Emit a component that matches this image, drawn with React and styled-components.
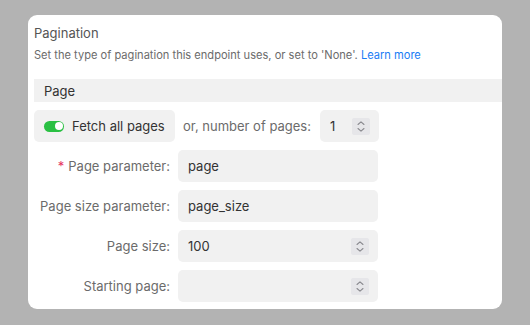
import React from "react";
import styled, { createGlobalStyle } from "styled-components";

const Global = createGlobalStyle`
  html, body { margin: 0; padding: 0; background: #b3b3b3; }
  body { font-family: Inter, "Noto Sans", sans-serif; -webkit-font-smoothing: antialiased; }
`;

const Page = styled.div`
  width: 530px;
  height: 325px;
  padding: 15px 0 0 28px;
  box-sizing: border-box;
`;

const Card = styled.div`
  width: 474px;
  height: 294px;
  background: #fff;
  border-radius: 9px;
  overflow: hidden;
  padding: 9px 0 0 6px;
  box-sizing: border-box;
`;

const Title = styled.div`
  font-size: 13px;
  color: #555;
  line-height: 18px;
  margin-bottom: 5px;
`;

const Desc = styled.div`
  font-size: 11.1px;
  color: #6b6b6b;
  line-height: 16px;
  margin-bottom: 16px;
  white-space: nowrap;
`;

const Link = styled.a`
  color: #1a7cf5;
  text-decoration: none;
`;

const Select = styled.div`
  height: 23px;
  width: calc(100% + 20px);
  background: #f1f1f1;
  display: flex;
  align-items: center;
  padding-left: 10px;
  box-sizing: border-box;
  font-size: 13px;
  color: #333;
  margin-bottom: 8px;
`;

const Row = styled.div`
  display: flex;
  align-items: center;
  height: 32px;
  margin-bottom: 8px;
`;

const FetchButton = styled.div`
  width: 141px;
  height: 32px;
  background: #f1f1f1;
  border-radius: 5px;
  display: flex;
  align-items: center;
  padding-left: 10px;
  box-sizing: border-box;
  gap: 8px;
  font-size: 13px;
  color: #333;
`;

const Toggle = styled.span`
  width: 20px;
  height: 11px;
  border-radius: 6px;
  background: #2ac043;
  position: relative;
  &::after {
    content: "";
    position: absolute;
    right: 1.5px;
    top: 1.5px;
    width: 8px;
    height: 8px;
    border-radius: 50%;
    background: #fff;
  }
`;

const Muted = styled.span`
  font-size: 13px;
  color: #6b6b6b;
  margin: 0 9px 0 8px;
`;

const Label = styled.label`
  width: 136px;
  text-align: right;
  font-size: 13px;
  color: #6b6b6b;
  margin-right: 8px;
  flex-shrink: 0;
`;

const Req = styled.span`
  color: #e5355f;
  margin-right: 4px;
`;

const Input = styled.div`
  width: ${(p) => p.$w || 200}px;
  height: 32px;
  background: #f1f1f1;
  border-radius: 5px;
  display: flex;
  align-items: center;
  justify-content: space-between;
  padding: 0 9px 0 10px;
  box-sizing: border-box;
  font-size: 13px;
  color: #333;
`;

const Stepper = styled.span`
  width: 18px;
  height: 17px;
  background: #e6e6e9;
  border-radius: 2px;
  display: flex;
  align-items: center;
  justify-content: center;
`;

const Steps = () => (
  <Stepper>
    <svg width="10" height="13" viewBox="0 0 10 13" fill="none" stroke="#8a8a8f" strokeWidth="1.1" strokeLinecap="round" strokeLinejoin="round">
      <path d="M2 4.5 L5 1.8 L8 4.5" />
      <path d="M2 8.5 L5 11.2 L8 8.5" />
    </svg>
  </Stepper>
);

export default function App() {
  return (
    <Page>
      <Global />
      <Card>
        <Title>Pagination</Title>
        <Desc>
          Set the type of pagination this endpoint uses, or set to 'None'. <Link>Learn more</Link>
        </Desc>
        <Select>Page</Select>
        <Row>
          <FetchButton>
            <Toggle />
            Fetch all pages
          </FetchButton>
          <Muted>or, number of pages:</Muted>
          <Input $w={59}>
            1
            <Steps />
          </Input>
        </Row>
        <Row>
          <Label>
            <Req>*</Req>Page parameter:
          </Label>
          <Input>page</Input>
        </Row>
        <Row>
          <Label>Page size parameter:</Label>
          <Input>page_size</Input>
        </Row>
        <Row>
          <Label>Page size:</Label>
          <Input>
            100
            <Steps />
          </Input>
        </Row>
        <Row>
          <Label>Starting page:</Label>
          <Input>
            <span />
            <Steps />
          </Input>
        </Row>
      </Card>
    </Page>
  );
}
